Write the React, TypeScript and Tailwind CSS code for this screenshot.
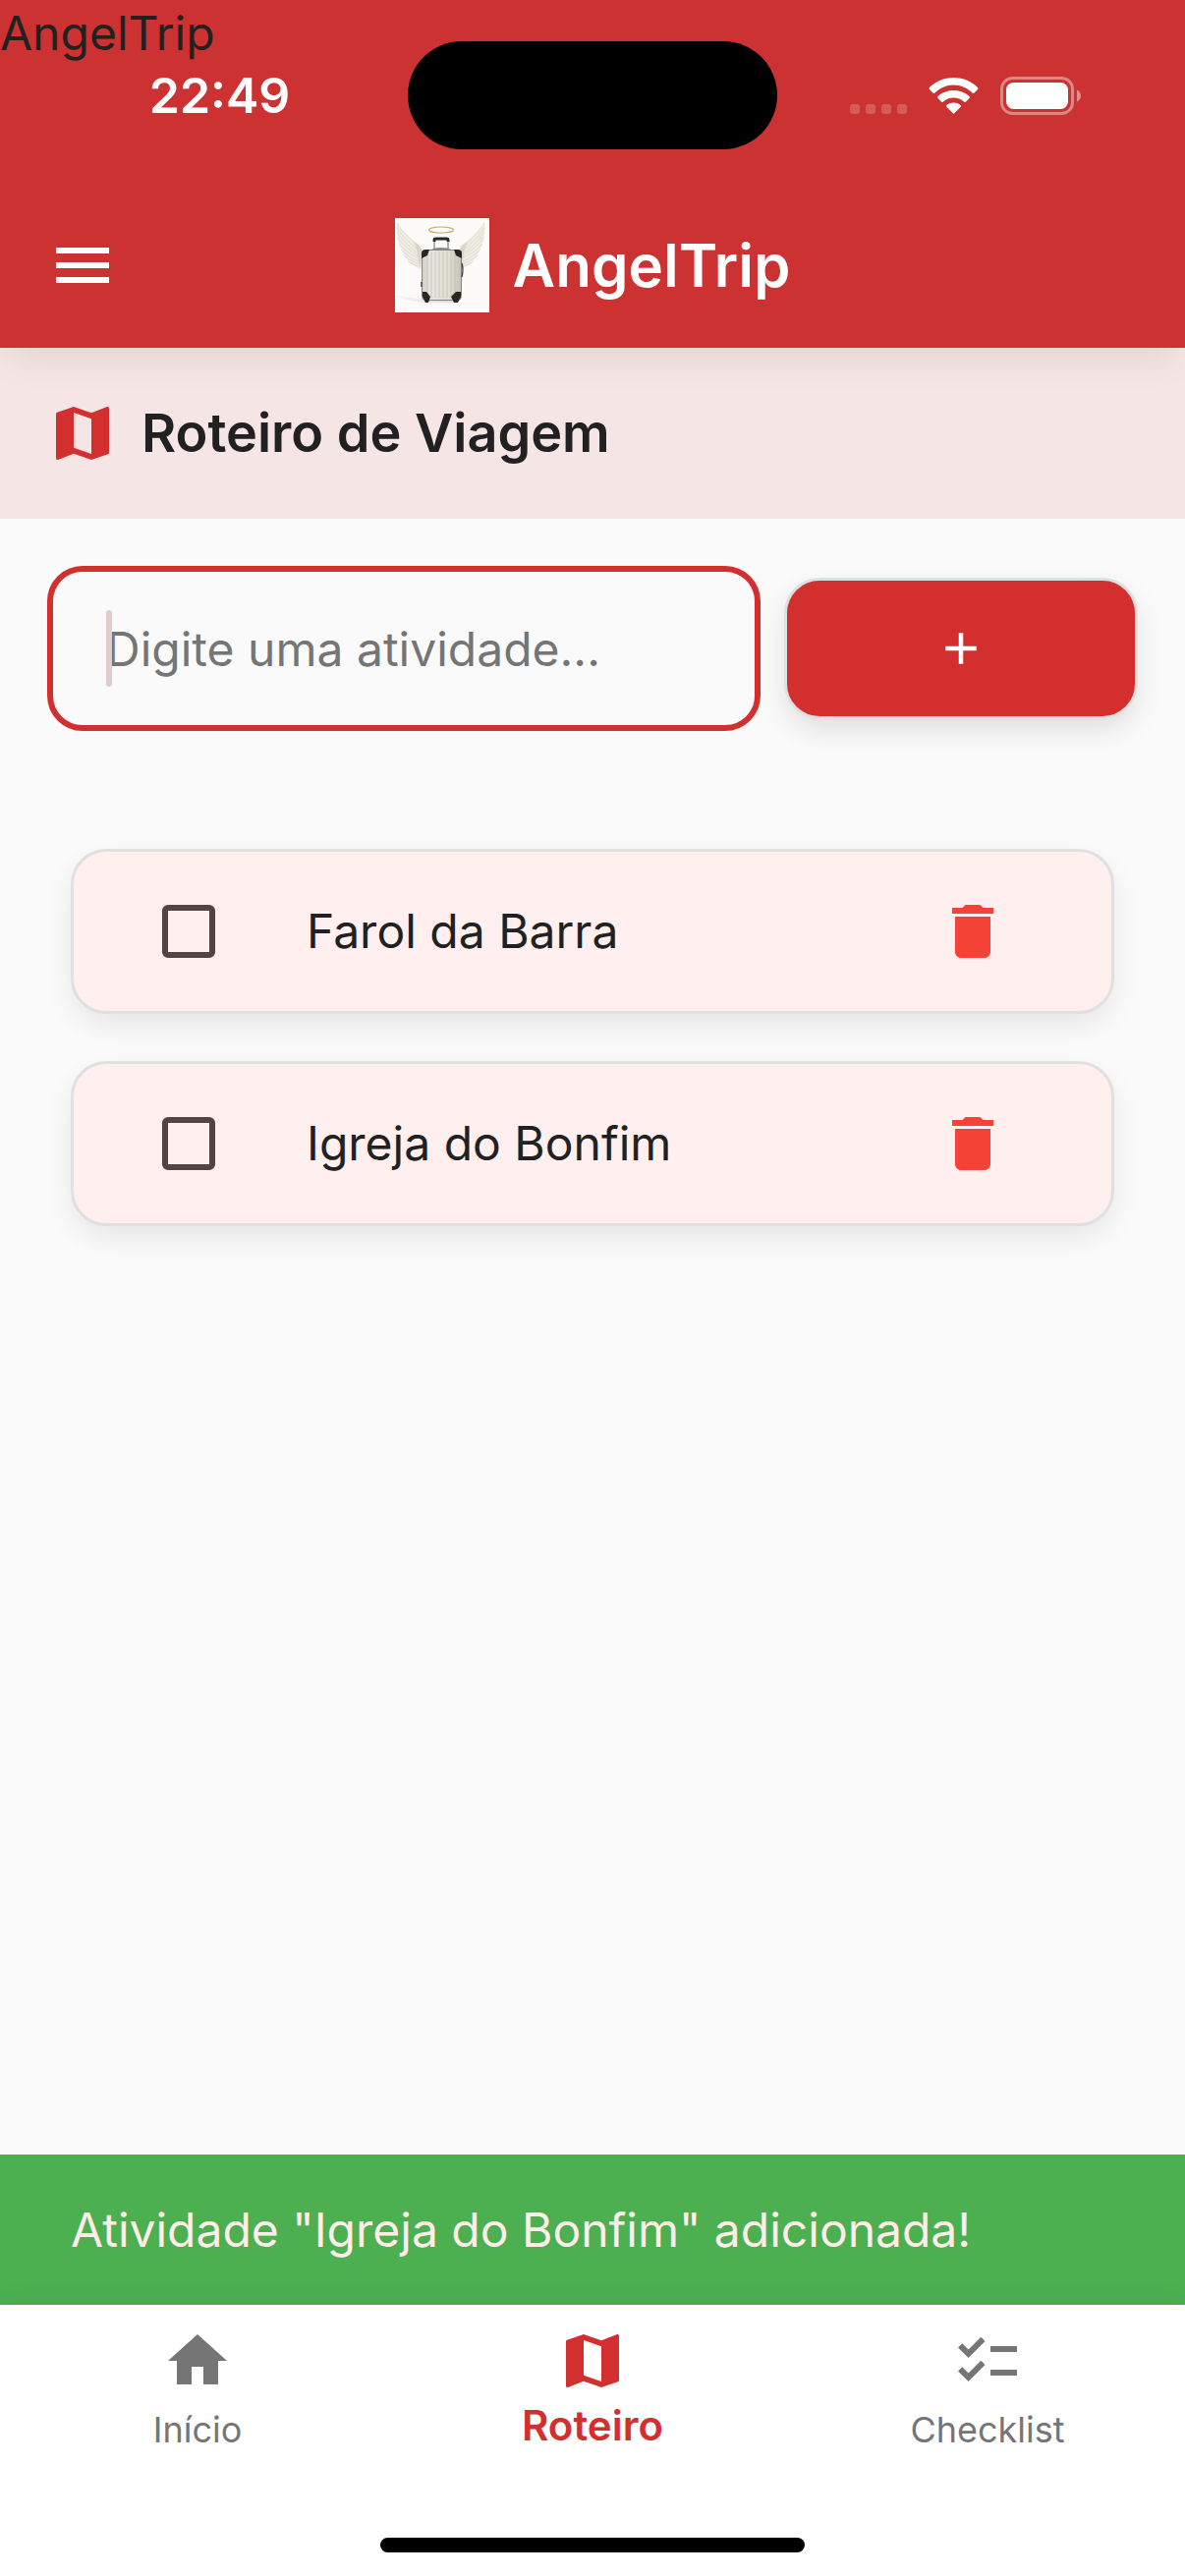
import { useState } from "react";
import { MdAdd, MdChecklist, MdDelete, MdHome, MdMap, MdMenu } from "react-icons/md";

const activities = ["Farol da Barra", "Igreja do Bonfim"];

const tabs = [
  { label: "Início", Icon: MdHome },
  { label: "Roteiro", Icon: MdMap },
  { label: "Checklist", Icon: MdChecklist },
];

const ribs = [33, 37, 41, 45, 49, 53, 57, 61];

const feathers = [
  "M2 5C5 10 12 19 20 25C27 30 29 38 27 52",
  "M2 9C6 17 14 25 22 31",
  "M2 14C7 22 14 29 22 35",
  "M3 20C8 27 15 33 23 38",
  "M4 26C9 32 16 37 24 41",
  "M6 32C11 37 17 41 24 44",
  "M9 38C14 42 19 45 25 47",
  "M13 44C17 46 21 49 26 49",
];

function Wing() {
  return (
    <g>
      <path
        d="M2 4C1 9 1 13 2 16C2 20 3 23 4 26C5 29 6 32 8 35C9 38 11 41 14 44C17 48 21 50 26 52L28 32C25 25 21 25 17 21C11 16 6 11 2 4Z"
        fill="#efece4"
      />
      <path d="M19 25C24 26 28 30 27 36L26 50C22 44 25 35 19 25Z" fill="#dbd5c8" />
      {feathers.map((d) => (
        <path key={d} d={d} fill="none" stroke="#dbd6ca" strokeWidth="0.7" />
      ))}
    </g>
  );
}

function Logo() {
  return (
    <svg viewBox="0 0 96 96" className="size-24" role="img" aria-label="Mala com asas">
      <defs>
        <linearGradient id="shell" x1="0" x2="1">
          <stop offset="0" stopColor="#d2cfc5" />
          <stop offset="0.2" stopColor="#e8e5dc" />
          <stop offset="0.7" stopColor="#e1ded3" />
          <stop offset="1" stopColor="#c4c1b6" />
        </linearGradient>
        <linearGradient id="floor" x1="0" x2="1">
          <stop offset="0" stopColor="#f6f4f2" />
          <stop offset="1" stopColor="#dedbd7" />
        </linearGradient>
      </defs>
      <rect width="96" height="96" fill="#fdfbf9" />
      <path d="M2 79C12 81 22 82 32 82L64 84V86H30C18 85 8 83 2 79Z" fill="url(#floor)" />
      <Wing />
      <g transform="translate(93 0) scale(-1 1)">
        <Wing />
      </g>
      <ellipse cx="47" cy="12" rx="12.5" ry="3" fill="none" stroke="#cda869" strokeWidth="1.2" />
      <path d="M40 32V22M54 32V22" stroke="#9a9f9f" strokeWidth="1.6" />
      <path d="M40 24V22Q40 21 42 21H52Q54 21 54 22V24" fill="none" stroke="#262824" strokeWidth="2.8" />
      <path d="M36 33Q38 30 47 30Q56 30 58 33Z" fill="#858986" />
      <rect x="27.5" y="32.5" width="40" height="51" rx="4" fill="url(#shell)" stroke="#85867f" strokeWidth="1" />
      {ribs.map((x) => (
        <path key={x} d={`M${x} 34V81`} stroke="#c3c0b5" strokeWidth="0.8" />
      ))}
      <path d="M27 41V36Q27 32 31 32H35L33 38Z" fill="#252723" />
      <path d="M68 41V36Q68 32 64 32H60L62 38Z" fill="#252723" />
      <path d="M28 75V80L31 86H34L36 80L32 75Z" fill="#252723" />
      <path d="M67 75V80L64 86H60L57 80L62 75Z" fill="#252723" />
      <path d="M68 46Q70 52 68 60M27 65V70" fill="none" stroke="#454743" strokeWidth="1.4" />
    </svg>
  );
}

function StatusIcons() {
  return (
    <svg viewBox="0 -1 235 40" className="h-10 w-[235px]" aria-hidden="true">
      <g fill="#fff" fillOpacity="0.2">
        <rect x="0" y="28" width="10" height="10" rx="3" />
        <rect x="16" y="28" width="10" height="10" rx="3" />
        <rect x="32" y="28" width="10" height="10" rx="3" />
        <rect x="48" y="28" width="10" height="10" rx="3" />
      </g>
      <g fill="#fff">
        <path d="M105.500 1C115.500 1 124 5 130 11Q131 12 130 13L126.500 16.500Q125.500 17.500 124.500 16.500C119.500 11.500 113 8.500 105.500 8.500C98 8.500 91.500 11.500 86.500 16.500Q85.500 17.500 84.500 16.500L81 13Q80 12 81 11C87 5 95.500 1 105.500 1Z" />
        <path d="M105.500 14C112 14 117.500 16.500 121.500 20Q122.500 21 121.500 22L118 25.500Q117 26.500 116 25.500C113 23 109.500 21.500 105.500 21.500C101.500 21.500 98 23 95 25.500Q94 26.500 93 25.500L89.500 22Q88.500 21 89.500 20C93.500 16.500 99 14 105.500 14Z" />
        <path d="M105.500 26.500C108.500 26.500 111 27.500 112.500 29Q113.500 30 112.500 31L106.500 37Q105.500 38 104.500 37L98.500 31Q97.500 30 98.500 29C100 27.500 102.500 26.500 105.500 26.500Z" />
      </g>
      <rect x="154.500" y="1.500" width="72" height="36" rx="11" fill="none" stroke="#fff" strokeOpacity="0.4" strokeWidth="3" />
      <rect x="159" y="6" width="63" height="27" rx="7.500" fill="#fff" />
      <path d="M231 13.500C233.500 14.500 235 17 235 19.500C235 22 233.500 24.500 231 25.500Z" fill="#fff" fillOpacity="0.45" />
    </svg>
  );
}

export default function App() {
  const [draft, setDraft] = useState("");
  return (
    <div className="flex min-h-screen flex-col bg-[#fafafa] font-['Inter',sans-serif] text-[#212121]">
      <header className="relative z-10 bg-[#cc3232] shadow-[0_18px_36px_-8px_rgba(0,0,0,0.08)]">
        <span className="absolute top-0 left-0 text-5xl leading-[68px]">AngelTrip</span>
        <div className="grid h-[186px] grid-cols-[1fr_376px_1fr] items-center pt-2 text-white">
          <time className="pl-8 text-center text-[50px] leading-none font-semibold">22:49</time>
          <div className="h-[110px] rounded-full bg-black" />
          <div className="flex justify-center pr-8">
            <StatusIcons />
          </div>
        </div>
        <div className="grid h-[168px] grid-cols-[1fr_auto_1fr] items-center px-12 text-white">
          <button type="button" aria-label="Abrir menu" className="size-18">
            <MdMenu className="size-18" />
          </button>
          <div className="flex items-center gap-6">
            <Logo />
            <h1 className="text-6xl font-semibold">AngelTrip</h1>
          </div>
        </div>
      </header>

      <main className="flex flex-1 flex-col">
        <div className="flex items-center gap-6 bg-[#f5e5e5] px-12 py-12">
          <MdMap className="size-18 text-[#d32f2f]" />
          <h2 className="text-[54px] leading-[78px] font-semibold">Roteiro de Viagem</h2>
        </div>

        <form className="flex items-center gap-6 px-12 pt-12" onSubmit={(e) => e.preventDefault()}>
          <div className="relative min-w-0 flex-1">
            <input
              type="text"
              aria-label="Atividade"
              placeholder="Digite uma atividade..."
              value={draft}
              onChange={(e) => setDraft(e.target.value)}
              className="h-[168px] w-full rounded-[36px] border-6 border-[#d32f2f] bg-transparent px-[54px] text-5xl caret-transparent outline-none placeholder:text-[#757575]"
            />
            <span className="absolute inset-y-[45px] left-15 w-1.5 rounded-full bg-[#e0cccc]" />
          </div>
          <button
            type="submit"
            aria-label="Adicionar atividade"
            className="flex h-36 w-[360px] items-center justify-center rounded-[36px] border-3 border-[#e0e0e0] bg-[#d32f2f] text-white shadow-[0_12px_30px_-3px_rgba(0,0,0,0.12)]"
          >
            <MdAdd className="size-[54px]" />
          </button>
        </form>

        <ul className="flex flex-col gap-12 px-18 pt-30">
          {activities.map((activity) => (
            <li
              key={activity}
              className="flex h-[168px] items-center rounded-[36px] border-3 border-[#e0e0e0] bg-[#ffefee] pr-[105px] pl-[90px] shadow-[0_12px_30px_-3px_rgba(0,0,0,0.09)]"
            >
              <label className="flex flex-1 items-center gap-[93px] text-5xl">
                <input
                  type="checkbox"
                  className="size-[54px] appearance-none rounded-md border-6 border-[#534343] checked:bg-[#534343]"
                />
                {activity}
              </label>
              <button type="button" aria-label={`Excluir ${activity}`} className="text-[#f44336]">
                <MdDelete className="size-18" />
              </button>
            </li>
          ))}
        </ul>
      </main>

      <div role="status" className="bg-[#4caf50] px-18 py-12 text-5xl leading-[57px] text-[#ffedea]">
        Atividade "Igreja do Bonfim" adicionada!
      </div>

      <nav className="bg-white pt-[21px] shadow-[0_-6px_24px_rgba(0,0,0,0.04)]">
        <div className="grid grid-cols-3">
          {tabs.map(({ label, Icon }) => {
            const active = label === "Roteiro";
            return (
              <button
                key={label}
                type="button"
                aria-current={active ? "page" : undefined}
                className={active ? "flex flex-col items-center text-[#d32f2f]" : "flex flex-col items-center text-[#757575]"}
              >
                <Icon className="size-18" />
                <span className={active ? "text-[42px] leading-[60px] font-semibold" : "text-4xl leading-[68px]"}>
                  {label}
                </span>
              </button>
            );
          })}
        </div>
        <div className="flex justify-center pt-[76px] pb-6">
          <div className="h-[15px] w-[432px] rounded-full bg-black" />
        </div>
      </nav>
    </div>
  );
}
